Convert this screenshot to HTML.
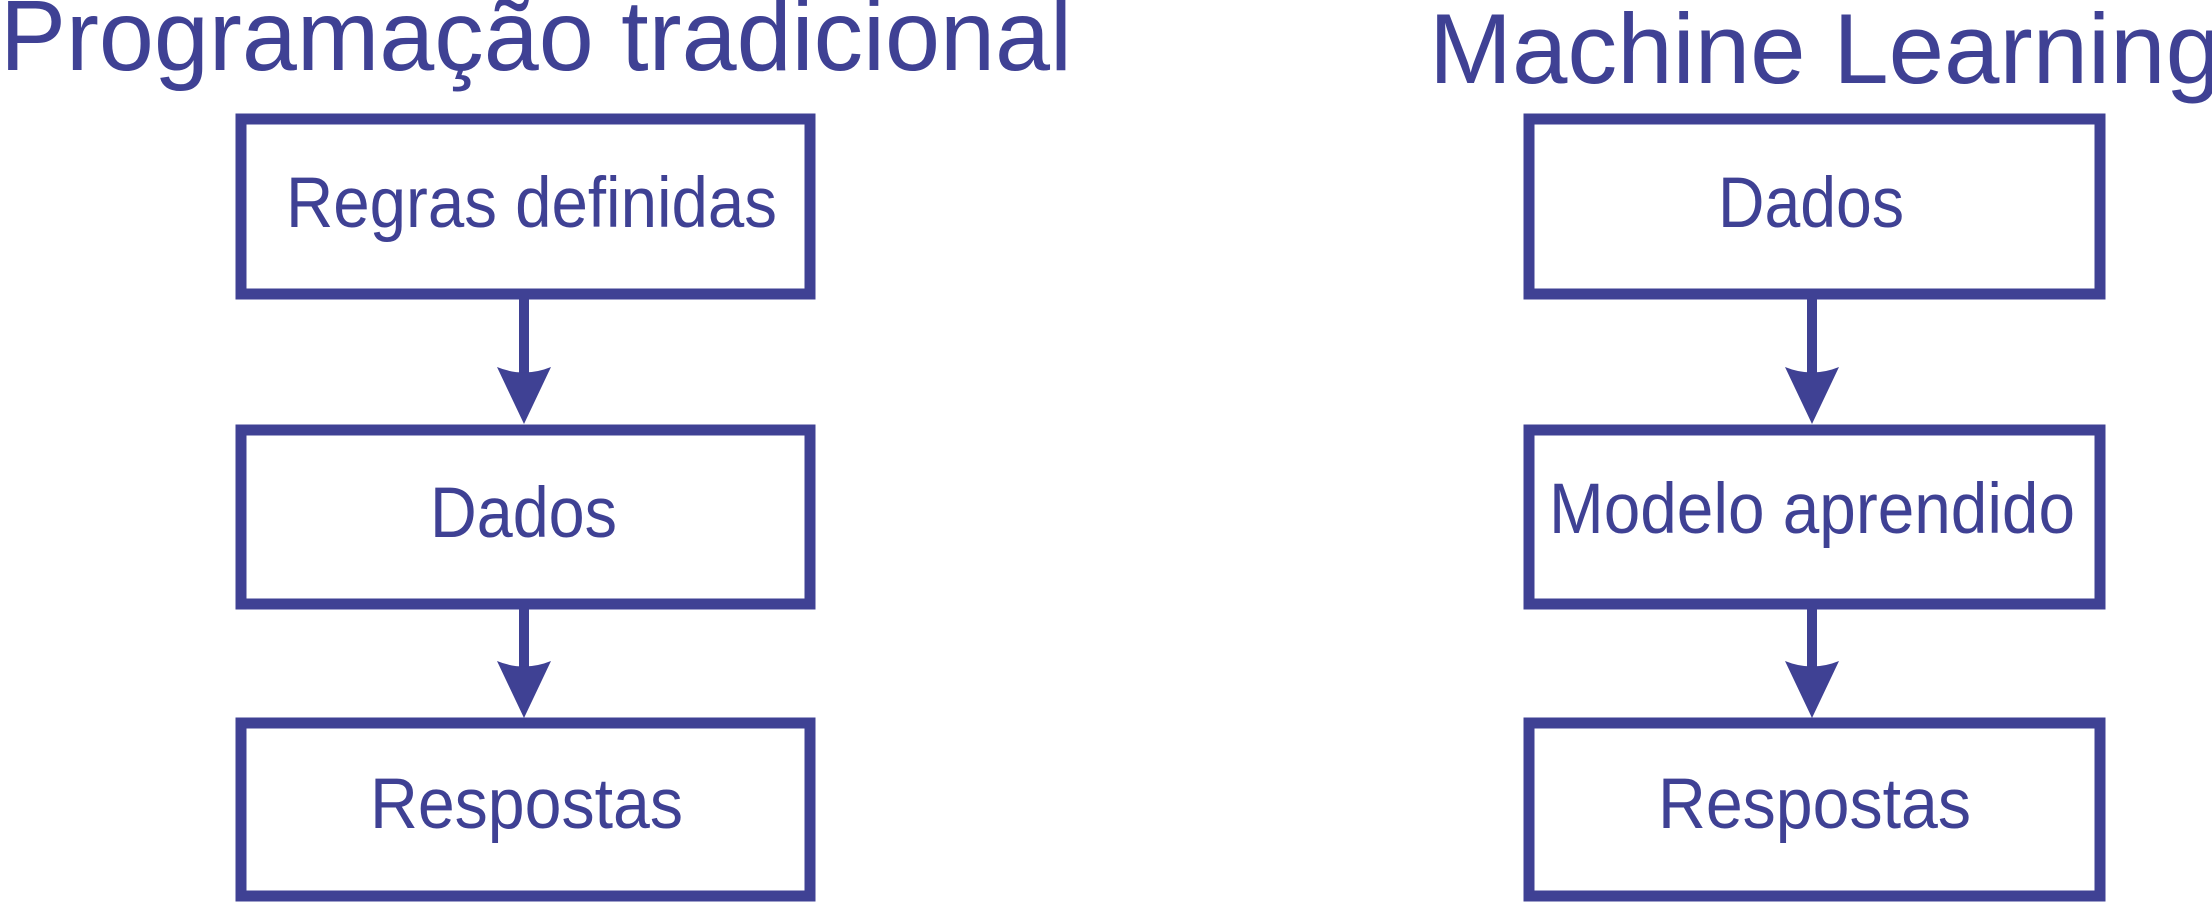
<!DOCTYPE html>
<html><head><meta charset="utf-8"><style>html,body{margin:0;padding:0;background:#fff;width:2212px;height:906px;overflow:hidden}</style></head>
<body>
<svg width="2212" height="906" viewBox="0 0 2212 906" xmlns="http://www.w3.org/2000/svg" font-family="Liberation Sans, Arial, sans-serif" fill="#3f4194">
<g fill="none" stroke="#3f4194" stroke-width="11">
<rect x="241" y="119" width="569" height="175"/>
<rect x="241" y="430" width="569" height="174"/>
<rect x="241" y="723" width="569" height="173"/>
<rect x="1529" y="119" width="571" height="175"/>
<rect x="1529" y="430" width="571" height="174"/>
<rect x="1529" y="723" width="571" height="173"/>
</g>
<g fill="none" stroke="#3f4194" stroke-width="10">
<line x1="524" y1="299" x2="524" y2="380"/>
<line x1="524" y1="609" x2="524" y2="670"/>
<line x1="1812" y1="299" x2="1812" y2="380"/>
<line x1="1812" y1="609" x2="1812" y2="670"/>
</g>
<path d="M497,367 Q524,378 551,367 L524,424 Z"/>
<path d="M497,661 Q524,672 551,661 L524,718 Z"/>
<path d="M1785,367 Q1812,378 1839,367 L1812,424 Z"/>
<path d="M1785,661 Q1812,672 1839,661 L1812,718 Z"/>
<text x="0" y="70" font-size="100" textLength="1072" lengthAdjust="spacingAndGlyphs">Programação tradicional</text>
<text x="1429" y="83" font-size="99" textLength="792" lengthAdjust="spacingAndGlyphs">Machine Learning</text>
<g font-size="71">
<text x="286" y="227" textLength="491" lengthAdjust="spacingAndGlyphs">Regras definidas</text>
<text x="430" y="537" textLength="187" lengthAdjust="spacingAndGlyphs">Dados</text>
<text x="370" y="828" textLength="313" lengthAdjust="spacingAndGlyphs">Respostas</text>
<text x="1718" y="227" textLength="186" lengthAdjust="spacingAndGlyphs">Dados</text>
<text x="1549" y="533" textLength="526" lengthAdjust="spacingAndGlyphs">Modelo aprendido</text>
<text x="1658" y="828" textLength="313" lengthAdjust="spacingAndGlyphs">Respostas</text>
</g>
</svg>
</body></html>
